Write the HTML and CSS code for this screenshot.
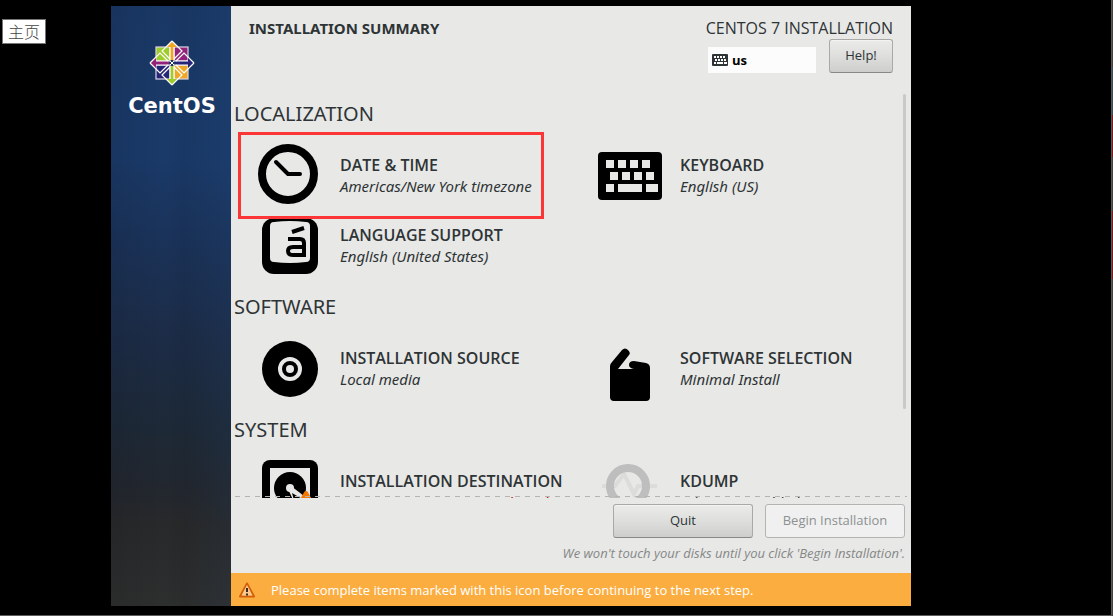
FILE: index.html
```html
<!DOCTYPE html>
<html lang="en">
<head>
<meta charset="utf-8">
<title>CentOS 7 Installation</title>
<link rel="stylesheet" href="styles.css">
</head>
<body>
<div class="desk">
  <div class="tooltip" lang="zh">主页</div>
  <div class="window">
    <aside class="sidebar">
      <svg class="logo" viewBox="-24 -24 48 48" aria-hidden="true">
        <g stroke="#dcd6e6" stroke-width="1.200">
          <rect x="-16" y="-16" width="14" height="14" fill="#9ccd2a"/>
          <rect x="2" y="-16" width="14" height="14" fill="#932279"/>
          <rect x="2" y="2" width="14" height="14" fill="#efa724"/>
          <rect x="-16" y="2" width="14" height="14" fill="#262577"/>
        </g>
        <path d="M0-22L6-16H2V-3H-2V-16H-6Z" fill="#efa724"/>
        <path d="M22 0L16 6V2H3V-2H16V-6Z" fill="#262577"/>
        <path d="M0 22L-6 16H-2V3H2V16H6Z" fill="#9ccd2a"/>
        <path d="M-22 0L-16-6V-2H-3V2H-16V6Z" fill="#932279"/>
        <g fill="none" stroke="#fff" stroke-width="1.200">
          <path d="M-2-3V-16M2-3V-16M-2 3V16M2 3V16M3-2H16M3 2H16M-3-2H-16M-3 2H-16"/>
          <path d="M0-22L10-12L2-4M0-22L-10-12L-2-4M0 22L10 12L2 4M0 22L-10 12L-2 4"/>
          <path d="M22 0L12-10L4-2M22 0L12 10L4 2M-22 0L-12-10L-4-2M-22 0L-12 10L-4 2"/>
        </g>
        <path d="M-2-2L2 2M2-2L-2 2" stroke="#fff" stroke-width="1"/>
      </svg>
      <div class="wordmark">CentOS</div>
    </aside>
    <main class="main">
      <header class="header">
        <h1 class="title">INSTALLATION SUMMARY</h1>
        <div class="product">
          <div class="product-name">CENTOS 7 INSTALLATION</div>
          <div class="tools">
            <div class="layout">
              <svg class="layout-icon" viewBox="0 0 16 12" aria-hidden="true"><rect width="16" height="12" rx="1" fill="#2e3436"/><path d="M2 3H13.500M3 6H14.500" stroke="#fcfcfc" stroke-width="2" stroke-dasharray="2 1"/><path d="M2 9H4M5 9H11M12 9H15" stroke="#fcfcfc" stroke-width="2"/></svg>
              <span>us</span>
            </div>
            <button class="button help" type="button">Help!</button>
          </div>
        </div>
      </header>

      <div class="hub">
        <section>
          <h2 class="heading">LOCALIZATION</h2>
          <div class="spokes">
            <button class="spoke marked" type="button">
              <svg class="icon" viewBox="0 0 64 64" aria-hidden="true"><circle cx="30" cy="30" r="26" fill="none" stroke="#000" stroke-width="8"/><path d="M18 18L30 30H42" fill="none" stroke="#000" stroke-width="4" stroke-linecap="round" stroke-linejoin="round"/></svg>
              <span class="label"><span class="name">DATE &amp; TIME</span><span class="status">Americas/New York timezone</span></span>
            </button>
            <button class="spoke" type="button">
              <svg class="icon" viewBox="0 0 64 64" aria-hidden="true"><rect y="8" width="64" height="48" rx="4"/><g stroke="#e8e8e6" stroke-width="8"><path d="M8 20H52M12 32H56" stroke-dasharray="8 4"/><path d="M8 44H16M20 44H44M48 44H60"/></g></svg>
              <span class="label"><span class="name">KEYBOARD</span><span class="status">English (US)</span></span>
            </button>
            <button class="spoke" type="button">
              <svg class="icon" viewBox="0 0 64 64" aria-hidden="true"><rect x="4" y="4" width="56" height="56" rx="12"/><path d="M16 8Q32 6 48 8Q52 8 52 12V44Q52 48 48 48Q32 50 16 48Q12 48 12 44V12Q12 8 16 8Z" fill="#e8e8e6"/><path d="M34 18L46 14" stroke="#000" stroke-width="4"/><path d="M30 25H42Q46 25 46 29V43M46 33H35Q30 33 30 37T35 41H46" fill="none" stroke="#000" stroke-width="4"/></svg>
              <span class="label"><span class="name">LANGUAGE SUPPORT</span><span class="status">English (United States)</span></span>
            </button>
          </div>
        </section>
        <section>
          <h2 class="heading">SOFTWARE</h2>
          <div class="spokes">
            <button class="spoke" type="button">
              <svg class="icon" viewBox="0 0 64 64" aria-hidden="true"><circle cx="32" cy="32" r="28"/><circle cx="32" cy="32" r="10" fill="none" stroke="#e8e8e6" stroke-width="4"/><circle cx="32" cy="32" r="4" fill="#e8e8e6"/></svg>
              <span class="label"><span class="name">INSTALLATION SOURCE</span><span class="status">Local media</span></span>
            </button>
            <button class="spoke" type="button">
              <svg class="icon" viewBox="0 0 64 64" aria-hidden="true"><path d="M12 29Q12 27 14 25L24 13Q27 10 30 13T31 18L20 32H36Q31 31 31 28Q31 24 36 24L48 26Q52 27 52 31V60Q52 64 48 64H16Q12 64 12 60Z"/></svg>
              <span class="label"><span class="name">SOFTWARE SELECTION</span><span class="status">Minimal Install</span></span>
            </button>
          </div>
        </section>
        <section>
          <h2 class="heading">SYSTEM</h2>
          <div class="spokes">
            <button class="spoke" type="button">
              <svg class="icon" viewBox="0 0 64 64" aria-hidden="true"><rect x="4" width="56" height="64" rx="8"/><rect x="12" y="8" width="40" height="48" fill="#e8e8e6"/><circle cx="32" cy="28" r="16"/><circle cx="32" cy="28" r="4" fill="#e8e8e6"/><path d="M30 29L37 44L34 33L46 40V36L33 26Z" fill="#e8e8e6"/><path d="M48 33L60 54H36Z" fill="#f57900" stroke="#f57900" stroke-width="4" stroke-linejoin="round"/></svg>
              <span class="label"><span class="name">INSTALLATION DESTINATION</span><span class="status alert">Automatic partitioning selected</span></span>
            </button>
            <button class="spoke" type="button">
              <svg class="icon" viewBox="0 0 64 64" aria-hidden="true"><path d="M4 26H17L26 14L36 34L40 26H59" fill="none" stroke="#dcdcdb" stroke-width="4"/><circle cx="30" cy="26" r="18" fill="none" stroke="#bebebe" stroke-width="8"/></svg>
              <span class="label"><span class="name">KDUMP</span><span class="status">Kdump is enabled</span></span>
            </button>
          </div>
        </section>
        <div class="scrollbar"></div>
        <div class="cut"></div>
      </div>

      <footer class="footer">
        <div class="actions">
          <button class="button" type="button">Quit</button>
          <button class="button" type="button" disabled>Begin Installation</button>
        </div>
        <p class="note">We won't touch your disks until you click 'Begin Installation'.</p>
      </footer>
      <div class="infobar">
        <svg class="warn" viewBox="0 0 16 16" aria-hidden="true"><path d="M8 1.500L15 14.500H1Z" fill="#f9a24a" stroke="#d45f08" stroke-width="2" stroke-linejoin="round"/><path d="M8 3L13.500 13.500H2.500Z" fill="#fbc98d"/><path d="M8 6V10M8 11.500V13.500" stroke="#3a2c20" stroke-width="2"/></svg>
        <span>Please complete items marked with this icon before continuing to the next step.</span>
      </div>
    </main>
  </div>
</div>
<div class="edge"></div>
</body>
</html>
```
FILE: styles.css
```css
*, *::after { box-sizing: border-box; }

body {
  margin: 0;
  display: flex;
  height: 100vh;
  background: #000;
  color: #2e3436;
  font-family: "Open Sans", "Noto Sans", sans-serif;
  font-size: 13px;
}

button { font: inherit; color: inherit; }

.desk {
  position: relative;
  flex: 1;
  display: flex;
  padding: 6px 200px 9px 111px;
  border-right: 1px solid #5c5c5c;
  border-bottom: 1px solid #5c5c5c;
}

.edge {
  width: 1px;
  background: linear-gradient(#45413e 0 67px, #3c4c55 67px 115px, #7a1c1e 115px 157px, #45413e 157px 211px, #7a1c1e 211px 279px, #45413e 279px);
}

.tooltip {
  position: absolute;
  left: 2px;
  top: 19px;
  padding: 0 5px;
  border: 1px solid #767676;
  background: #fff;
  color: #444;
  font: 300 16px/23px "Noto Sans CJK SC", sans-serif;
}

.window { flex: 1; display: flex; background: #e8e8e6; }

.sidebar {
  width: 120px;
  padding: 33px 0 0 2px;
  display: flex;
  flex-direction: column;
  align-items: center;
  background:
    linear-gradient(90deg, rgba(0, 0, 0, .08), rgba(0, 0, 0, 0) 45%, rgba(0, 0, 0, .04) 60%, rgba(40, 90, 150, .08)),
    linear-gradient(#1a3865, #1a3a69 25%, #1a335a 38%, #1c2c47 55%, #1d2937 70%, #22272f 80%, #28292a 87%, #2d2e2e);
}

.logo { width: 48px; height: 48px; }

.wordmark {
  color: #fff;
  font: bold 21px/26px "DejaVu Sans", sans-serif;
  margin-top: 6px;
}

.main { flex: 1; min-width: 0; display: flex; flex-direction: column; }

.header {
  height: 88px;
  padding: 11px 18px 0;
  display: flex;
  justify-content: space-between;
}

.title {
  margin: 0;
  font-family: "Noto Sans", sans-serif;
  font-size: 15px;
  line-height: 22px;
  font-weight: 700;
}

.product-name { font-size: 16px; line-height: 22px; text-align: right; }
.tools { display: flex; justify-content: flex-end; align-items: flex-end; gap: 13px; }

.layout {
  width: 108px;
  height: 26px;
  padding: 0 4px;
  display: flex;
  align-items: center;
  gap: 4px;
  background: #fcfcfc;
  color: #000;
  font-weight: 700;
}

.layout-icon { width: 16px; height: 12px; }

.button {
  width: 140px;
  height: 34px;
  padding: 0 0 2px;
  border: 1px solid #a9a9a7;
  border-bottom-color: #888;
  border-radius: 3px;
  background: linear-gradient(#ebebea, #dededd 50%, #cececd);
  box-shadow: inset 0 1px #f3f3f2;
}

.button:disabled { background: #f0f0f0; border-color: #b4b4b2; color: #8d9091; }
.help { width: 64px; }

.hub { position: relative; flex: 1; min-height: 0; overflow: hidden; }

.heading {
  margin: 0;
  padding: 6px 3px 14px;
  font-family: "Noto Sans", sans-serif;
  font-size: 20px;
  line-height: 28px;
  font-weight: 400;
}

.spokes {
  display: grid;
  grid-template-columns: 1fr 1fr;
  padding-bottom: 5px;
}

.spoke {
  position: relative;
  height: 70px;
  padding: 2px 0 4px 27px;
  border: 0;
  background: none;
  display: flex;
  gap: 18px;
  text-align: left;
}

.marked::after {
  content: "";
  position: absolute;
  z-index: 1;
  left: 7px;
  right: 27px;
  top: -10px;
  height: 87px;
  border: 3px solid #fc3637;
}

.icon { width: 64px; height: 64px; flex: none; }
.label { padding-top: 11px; line-height: 21px; white-space: nowrap; }
.name, .status { display: block; }
.name { font-size: 16px; font-weight: 600; }
.status { font-family: "Noto Sans", sans-serif; font-size: 15px; font-style: italic; }
.alert { color: #d00; }

.scrollbar {
  position: absolute;
  right: 5px;
  top: 0;
  width: 3px;
  height: 78%;
  border-radius: 2px;
  background: #c9c9c7;
}

.cut {
  position: absolute;
  left: 4px;
  right: 4px;
  bottom: 1px;
  height: 1px;
  background: repeating-linear-gradient(90deg, #b4b4b2 0 5px, transparent 5px 10px);
}

.footer { padding: 6px 6px 9px; }
.actions { display: flex; justify-content: flex-end; gap: 12px; }
.note { margin: 4px 0 0; line-height: 22px; text-align: right; font-style: italic; color: #858786; }

.infobar {
  height: 33px;
  padding: 0 8px;
  display: flex;
  align-items: center;
  gap: 16px;
  background: #fbad3f;
  color: #fff;
}

.warn { width: 16px; height: 16px; }
```
